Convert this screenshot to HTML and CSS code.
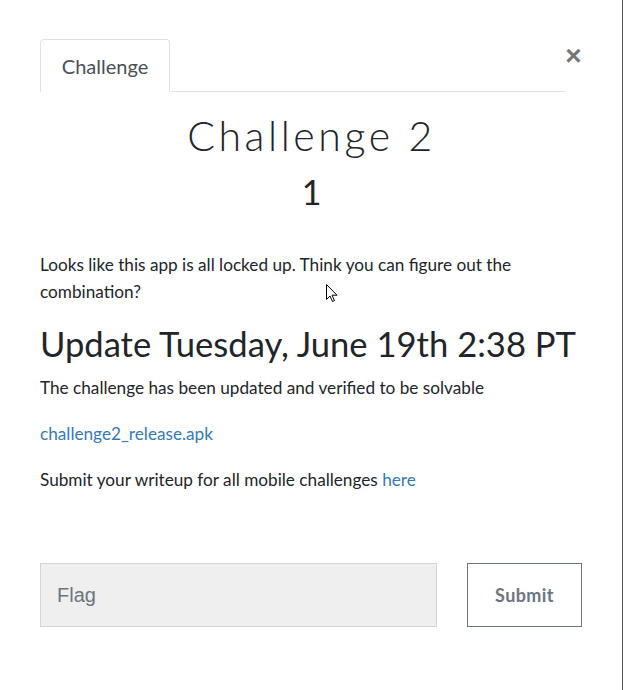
FILE: index.html
```html
<!DOCTYPE html>
<html>
<head>
<meta charset="utf-8">
<link rel="stylesheet" href="styles.css">
</head>
<body>
<div class="modal">
  <div class="header">
    <div class="nav">
      <div class="tab">Challenge</div>
    </div>
    <div class="close">&times;</div>
  </div>
  <div class="body">
    <h2 class="title">Challenge 2</h2>
    <h3 class="value">1</h3>
    <div class="desc">
      <p class="p1">Looks like this app is all locked up. Think you can figure out the combination?</p>
      <h2 class="update">Update Tuesday, June 19th 2:38 PT</h2>
      <p>The challenge has been updated and verified to be solvable</p>
      <p><a href="#">challenge2_release.apk</a></p>
      <p>Submit your writeup for all mobile challenges <a href="#">here</a></p>
    </div>
    <div class="form">
      <input class="flag" type="text" placeholder="Flag">
      <button class="submit">Submit</button>
    </div>
  </div>
  <svg class="cursor" width="12" height="19" viewBox="0 0 12 19"><path d="M0.5 0.5 L0.5 15.5 L4 12 L6.5 17.5 L8.5 16.6 L6 11.2 L11 11.2 Z" fill="#fff" stroke="#000" stroke-width="1"/></svg>
</div>
</body>
</html>
```
FILE: styles.css
```css
html, body {
  margin: 0;
  padding: 0;
  background: #fff;
}
body {
  font-family: Lato, "Liberation Sans", sans-serif;
  color: #212529;
  width: 623px;
  height: 690px;
  overflow: hidden;
}
.modal {
  position: relative;
  width: 622px;
  height: 690px;
  border-right: 1px solid #555;
  box-sizing: content-box;
}
.header {
  display: flex;
  padding: 39px 0 0 40px;
}
.nav {
  width: 525px;
  border-bottom: 1px solid #dee2e6;
  display: flex;
}
.tab {
  border: 1px solid #dee2e6;
  border-bottom: 1px solid #fff;
  margin-bottom: -1px;
  border-radius: 4px 4px 0 0;
  font-size: 20px;
  color: #495057;
  display: flex;
  align-items: center;
  justify-content: center;
  box-sizing: border-box;
  height: 53px;
  width: 130px;
}
.close {
  font-family: "Liberation Sans", sans-serif;
  font-size: 28px;
  font-weight: bold;
  color: #777;
  margin-top: 2px;
  line-height: 30px;
  width: 17px;
  text-align: center;
}
.body {
  padding: 0 40px;
}
.title {
  text-align: center;
  font-weight: 300;
  font-size: 41px;
  letter-spacing: 3.6px;
  margin: 20px 0 0 0;
  line-height: 48px;
  width: 543px;
}
.value {
  text-align: center;
  font-weight: 400;
  font-size: 34px;
  margin: 12px 0 0 0;
  line-height: 40px;
  width: 543px;
}
.desc {
  margin-top: 39px;
  font-size: 17.2px;
  line-height: 27px;
}
.desc p {
  margin: 0 0 19px 0;
  width: 525px;
}
.desc a {
  color: #337ab7;
  text-decoration: none;
}
.update {
  font-weight: 400;
  font-size: 34.6px;
  line-height: 40px;
  margin: 8px 0 10px 0;
  white-space: nowrap;
}
.form {
  display: flex;
  gap: 30px;
  margin-top: 70px;
}
.flag {
  width: 397px;
  height: 64px;
  box-sizing: border-box;
  background: #efefef;
  border: 1px solid #ced4da;
  padding: 0 16px;
  font-family: "Liberation Sans", sans-serif;
  font-size: 20px;
  outline: none;
}
.flag::placeholder {
  color: #6c757d;
}
.submit {
  width: 115px;
  height: 64px;
  box-sizing: border-box;
  background: #fff;
  border: 1px solid #6c757d;
  color: #6c757d;
  font-family: Lato, sans-serif;
  font-weight: bold;
  font-size: 18px;
  letter-spacing: 0.4px;
}
.cursor {
  position: absolute;
  left: 326px;
  top: 284px;
}
```
